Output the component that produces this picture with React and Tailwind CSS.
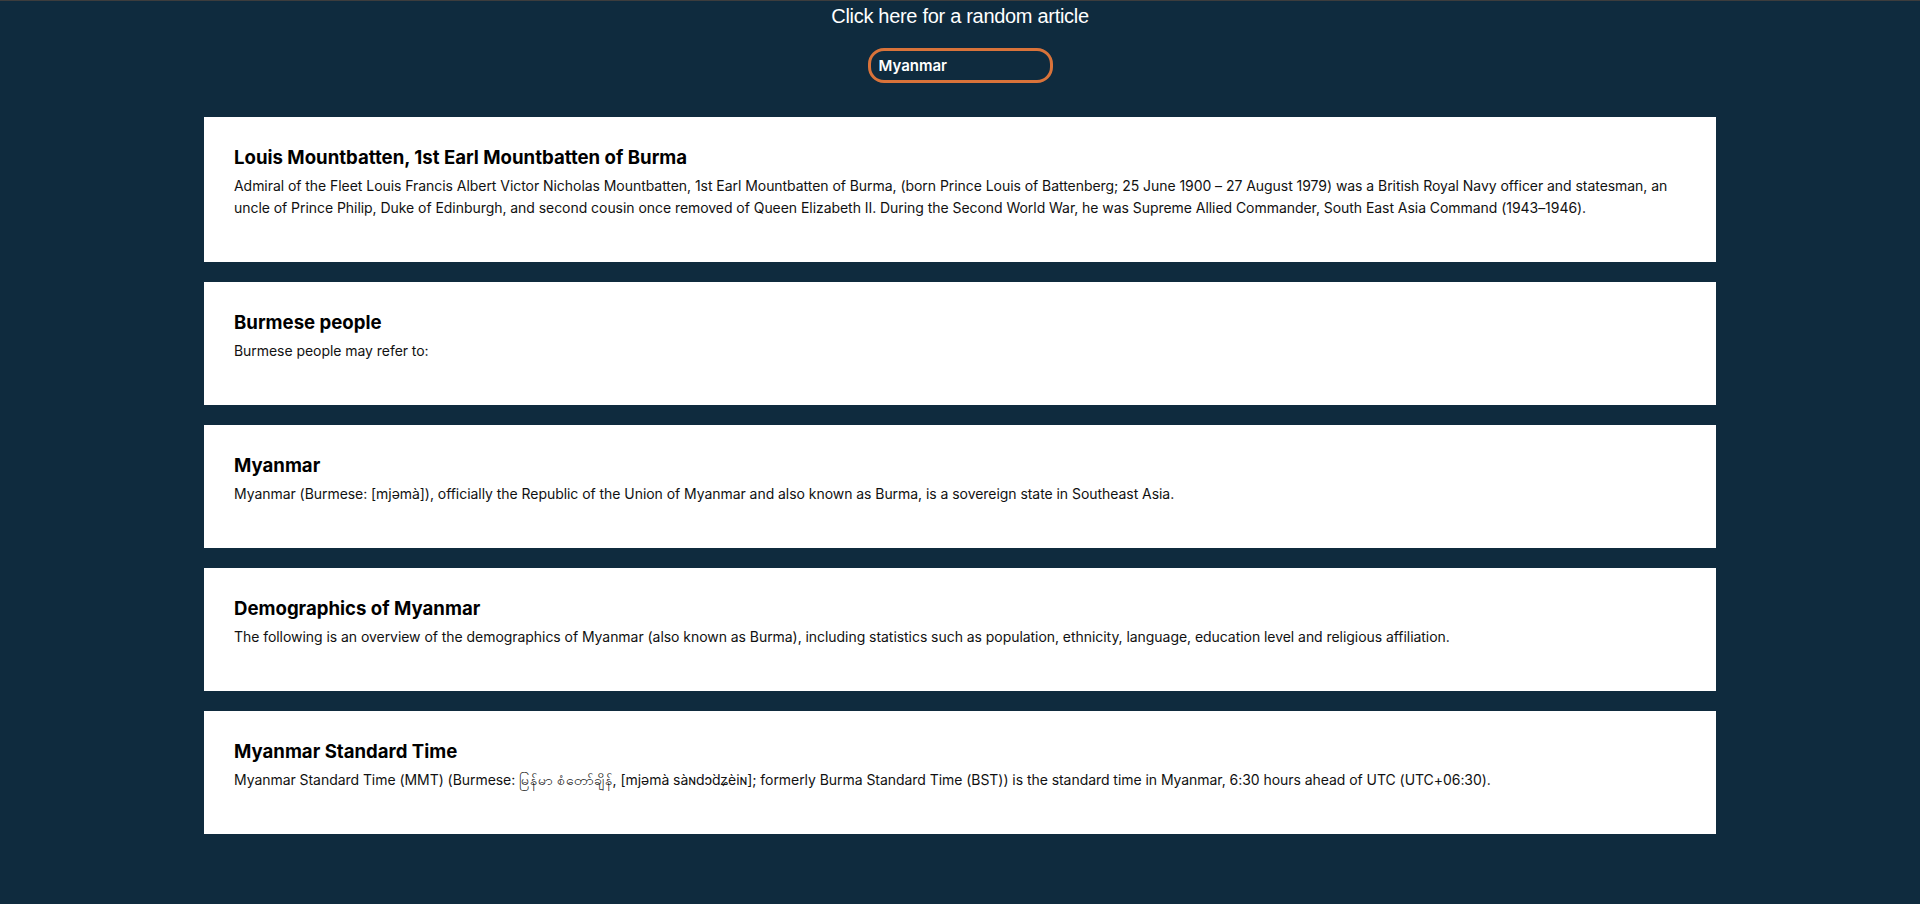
import React from 'react';

const articles = [
  {
    title: 'Louis Mountbatten, 1st Earl Mountbatten of Burma',
    text: 'Admiral of the Fleet Louis Francis Albert Victor Nicholas Mountbatten, 1st Earl Mountbatten of Burma, (born Prince Louis of Battenberg; 25 June 1900 – 27 August 1979) was a British Royal Navy officer and statesman, an uncle of Prince Philip, Duke of Edinburgh, and second cousin once removed of Queen Elizabeth II. During the Second World War, he was Supreme Allied Commander, South East Asia Command (1943–1946).',
  },
  {
    title: 'Burmese people',
    text: 'Burmese people may refer to:',
  },
  {
    title: 'Myanmar',
    text: 'Myanmar (Burmese: [mjəmà]), officially the Republic of the Union of Myanmar and also known as Burma, is a sovereign state in Southeast Asia.',
  },
  {
    title: 'Demographics of Myanmar',
    text: 'The following is an overview of the demographics of Myanmar (also known as Burma), including statistics such as population, ethnicity, language, education level and religious affiliation.',
  },
  {
    title: 'Myanmar Standard Time',
    text: 'Myanmar Standard Time (MMT) (Burmese: မြန်မာ စံတော်ချိန်, [mjəmà sàɴdɔ̀dʑèiɴ]; formerly Burma Standard Time (BST)) is the standard time in Myanmar, 6:30 hours ahead of UTC (UTC+06:30).',
  },
];

const App = () => {
  return (
    <div className="min-h-screen bg-[#0f2b3e] border-t border-[#3d3d3d] flex flex-col items-center font-['Inter',sans-serif]">
      {/* Header */}
      <a className="mt-[1px] text-white text-[20px] leading-7 tracking-[-0.3px] font-['Liberation_Sans',Arial,sans-serif] cursor-pointer">
        Click here for a random article
      </a>

      <input
        type="text"
        defaultValue="Myanmar"
        className="mt-[18px] w-[185px] h-[35px] rounded-[16px] border-[3px] border-[#d9733a] bg-transparent px-[8px] text-white text-[15px] font-semibold outline-none"
      />

      {/* Results */}
      <div className="w-[1512px] mt-[34px] flex flex-col gap-5">
        {articles.map((a) => (
          <div key={a.title} className="bg-white pt-7 pb-[43px] px-[30px]">
            <h3 className="text-[18.6px] leading-6 font-bold text-black">{a.title}</h3>
            <p className="mt-1.5 text-[14px] leading-[22px] tracking-[-0.05px] text-[#111]">{a.text}</p>
          </div>
        ))}
      </div>
    </div>
  );
};

export default App;
